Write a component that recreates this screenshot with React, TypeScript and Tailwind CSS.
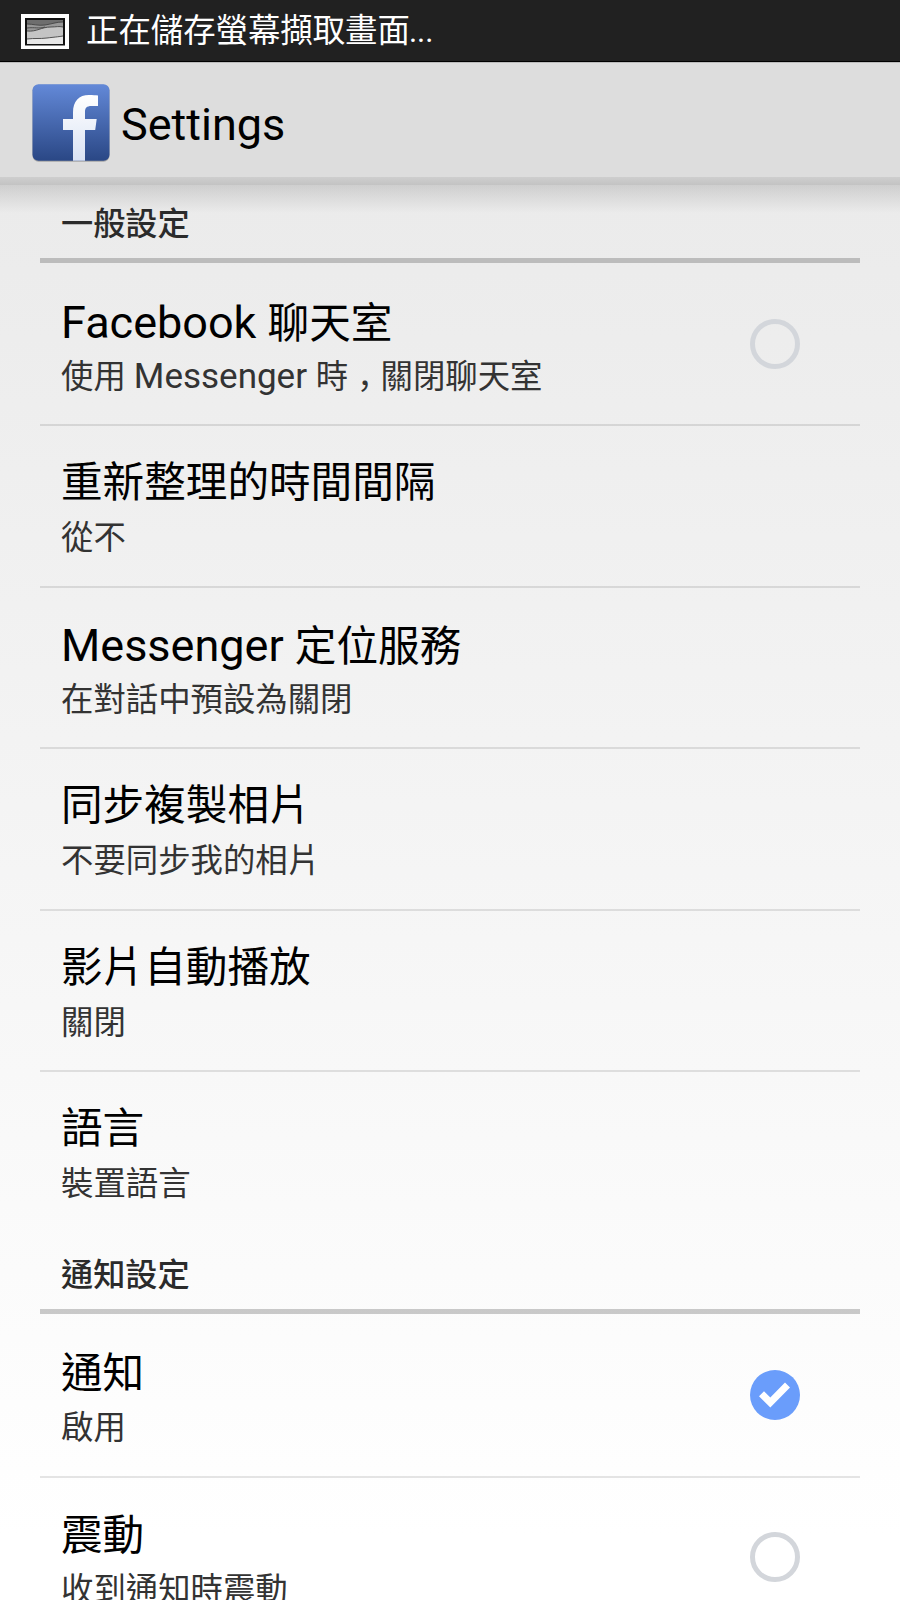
import clsx from "clsx";

type Item = {
  title: string;
  summary: string;
  checked?: boolean;
  size: string;
  last?: boolean;
};

const general: Item[] = [
  { title: "Facebook 聊天室", summary: "使用 Messenger 時，關閉聊天室", checked: false, size: "h-[163px] pt-[31px]" },
  { title: "重新整理的時間間隔", summary: "從不", size: "h-[161.6px] pt-[28px]" },
  { title: "Messenger 定位服務", summary: "在對話中預設為關閉", size: "h-[161.6px] pt-[29px]" },
  { title: "同步複製相片", summary: "不要同步我的相片", size: "h-[161.6px] pt-[28px]" },
  { title: "影片自動播放", summary: "關閉", size: "h-[161.6px] pt-[28px]" },
  { title: "語言", summary: "裝置語言", size: "h-[161.6px] pt-[28px]", last: true },
];

const notifications: Item[] = [
  { title: "通知", summary: "啟用", checked: true, size: "h-[164px] pt-[31px]" },
  { title: "震動", summary: "收到通知時震動", checked: false, size: "h-[161.6px] pt-[29px]" },
];

// Latin runs are set slightly larger than the Chinese around them
function Mixed({ text, latin }: { text: string; latin: string }) {
  return text.split(/([A-Za-z]+ ?|，)/).map((run, i) => {
    if (run === "，") {
      return (
        <span key={i} className="ml-[9px] font-['Noto_Sans_CJK_JP',sans-serif] leading-none tracking-[-9px]">
          {run}
        </span>
      );
    }
    return i % 2 ? (
      <span key={i} className={latin}>
        {run}
      </span>
    ) : (
      run
    );
  });
}

function Check({ on }: { on: boolean }) {
  return (
    <svg width="50" height="50" viewBox="0 0 50 50" className="shrink-0">
      {on ? (
        <>
          <circle cx="25" cy="25" r="25" fill="#6a9dfb" />
          <path d="M9 26.200l5-5 6.300 6.300L35 12.500l5 5L20.300 37.500z" fill="#fff" />
        </>
      ) : (
        <circle cx="25" cy="25" r="22.5" fill="none" stroke="#d3d6db" strokeWidth="5" />
      )}
    </svg>
  );
}

function Row({ item }: { item: Item }) {
  const tall = item.checked === undefined && !/[A-Za-z]/.test(item.title);
  return (
    <div
      className={clsx(
        "flex shrink-0 justify-between border-b-2 pl-[21px] pr-[60px]",
        item.last ? "border-transparent" : "border-black/10",
        item.size
      )}
    >
      <div className="whitespace-pre">
        <div className={clsx("text-[41.6px] leading-[58px] text-black", tall ? "h-[59px]" : "h-[58px]")}>
          <Mixed text={item.title} latin="text-[45px]" />
        </div>
        <div className="h-[50px] text-[32.4px] leading-[50px] text-[#333]">
          <Mixed text={item.summary} latin="text-[35px]" />
        </div>
      </div>
      {item.checked !== undefined && (
        <div className="mt-[25px]">
          <Check on={item.checked} />
        </div>
      )}
    </div>
  );
}

function Heading({ children, className }: { children: string; className: string }) {
  return (
    <h2
      className={clsx(
        "shrink-0 border-b-[5px] border-black/20 pl-[21px] text-[32.2px] leading-[48px] font-medium text-[#2b2b2b]",
        className
      )}
    >
      {children}
    </h2>
  );
}

function ScreenshotIcon() {
  return (
    <svg width="48" height="35" viewBox="0 0 48 35" className="mt-0.5 shrink-0">
      <rect width="48" height="35" fill="#fff" />
      <rect x="4" y="4" width="40" height="27.500" fill="#111" />
      <rect x="6" y="6" width="36" height="24" fill="#6e6e6e" />
      <path d="M6 10c6 0 11 2 18 1s11-3 18-3v22H6z" fill="#979797" />
      <path d="M6 17c10 1 14-4 24-4 5 0 8-1 12 0v17H6z" fill="#c4c4c4" />
      <path d="M6 25c8-1 12 0 20-1s10-1 16-2v8H6z" fill="#e6e6e6" />
      <path d="M6 10c6 0 11 2 18 1s11-3 18-3M6 14c8-1 12 1 18-1M6 17c10 1 14-4 24-4 5 0 8-1 12 0M6 25c8-1 12 0 20-1s10-1 16-2" fill="none" stroke="#444" strokeWidth="0.900" />
    </svg>
  );
}

function FacebookIcon() {
  return (
    <svg width="78" height="78" viewBox="0 0 78 78" className="shrink-0">
      <defs>
        <linearGradient id="tile" x1="0" y1="0" x2="0" y2="1">
          <stop offset="0" stopColor="#6389d8" />
          <stop offset="1" stopColor="#2a4785" />
        </linearGradient>
        <linearGradient id="mark" x1="0" y1="0" x2="0" y2="1">
          <stop offset="0" stopColor="#fff" />
          <stop offset="1" stopColor="#d9e2f4" />
        </linearGradient>
      </defs>
      <rect x="0.5" y="0.8" width="77" height="77" rx="6" fill="#a5a5a5" />
      <rect x="0.5" y="0.2" width="77" height="76.6" rx="6" fill="url(#tile)" />
      <path
        d="M41 76.800V46H31V35h10v-6.500C41 17 47 11 57 11c4 0 6.500.2 9 .5V22h-6.500C54.500 22 53 24 53 28v7h11.700l-1.500 11H53v30.800z"
        fill="url(#mark)"
      />
    </svg>
  );
}

export default function App() {
  return (
    <div className="flex h-[1600px] w-[900px] flex-col overflow-hidden bg-linear-to-b from-[#e8e8e8] to-white to-[96%] font-[Roboto,'Noto_Sans_CJK_TC',sans-serif]">
      <div className="flex h-[62px] shrink-0 items-center border-b border-black bg-[#212121] pl-[21px]">
        <ScreenshotIcon />
        <span className="mt-0.5 ml-[17px] text-[32.4px] leading-[60px] text-white">
          正在儲存螢幕擷取畫面<span className="-ml-px text-[31px]">...</span>
        </span>
      </div>
      <header className="flex h-[115px] shrink-0 items-center border-t border-[#bbb] bg-[#ddd] pt-[6px] pl-8">
        <FacebookIcon />
        <h1 className="ml-[11px] pt-1 text-[45px] leading-[60px] text-black">Settings</h1>
      </header>
      <div className="h-2 shrink-0 bg-linear-to-b from-[#cecece] to-[#c3c3c3]" />
      <main className="flex flex-col bg-linear-to-b from-black/12 to-transparent bg-[length:100%_28px] bg-no-repeat px-10">
        <Heading className="h-[78px] pt-[15px]">一般設定</Heading>
        {general.map((item) => (
          <Row key={item.title} item={item} />
        ))}
        <Heading className="h-[80.500px] pt-[17px]">通知設定</Heading>
        {notifications.map((item) => (
          <Row key={item.title} item={item} />
        ))}
      </main>
    </div>
  );
}
